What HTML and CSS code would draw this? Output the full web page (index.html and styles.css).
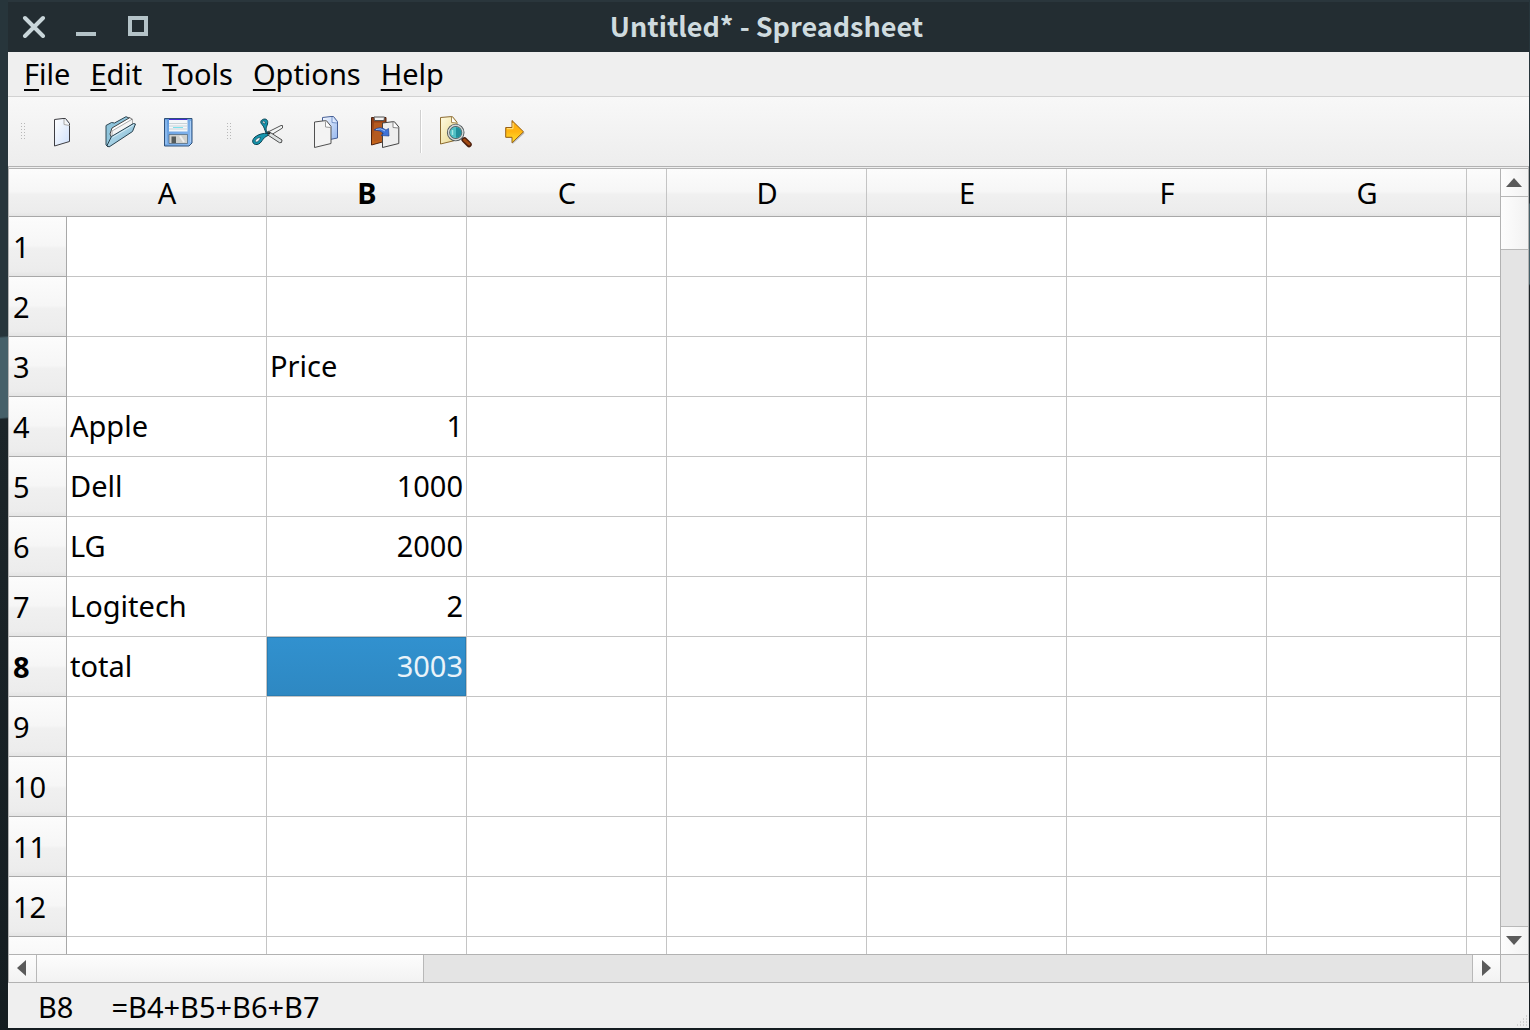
FILE: index.html
```html
<!DOCTYPE html>
<html lang="en">
<head>
<meta charset="utf-8">
<title>Untitled* - Spreadsheet</title>
<link rel="stylesheet" href="styles.css">
</head>
<body>
<div class="window">
  <header class="titlebar">
    <div class="window-buttons">
      <button type="button" aria-label="Close"><svg viewBox="0 0 24 24"><path d="M3 4 21 22M21 4 3 22" stroke="#c9d6da" stroke-width="4" stroke-linecap="round"/></svg></button>
      <button type="button" aria-label="Minimize"><svg viewBox="0 0 24 24"><path d="M2 18h20v4H2z" fill="#b4c3c8"/></svg></button>
      <button type="button" aria-label="Maximize"><svg viewBox="0 0 24 24"><path d="M4 4h16v16H4z" fill="none" stroke="#b4c3c8" stroke-width="4"/></svg></button>
    </div>
    <h1>Untitled* - Spreadsheet</h1>
  </header>

  <nav class="menubar" aria-label="Menu">
    <button type="button"><u>F</u>ile</button>
    <button type="button"><u>E</u>dit</button>
    <button type="button"><u>T</u>ools</button>
    <button type="button"><u>O</u>ptions</button>
    <button type="button"><u>H</u>elp</button>
  </nav>

  <div class="toolbar" role="toolbar" aria-label="Tools">
    <span class="handle"></span>
    <div class="tools">
      <button type="button" aria-label="New">
        <svg viewBox="0 0 32 32">
          <defs><linearGradient id="page" x1="0" y1="0" x2="1" y2="1"><stop offset="0" stop-color="#fff"/><stop offset="1" stop-color="#cfe0fb"/></linearGradient></defs>
          <path d="M8.500 3.500 17 2.500h2.500l4 5v18L8.500 30z" fill="url(#page)" stroke="#3d3d42"/>
          <path d="M18 3v5.500l5.500 1" fill="#f4f4f4" stroke="#aaa"/>
        </svg>
      </button>
      <button type="button" aria-label="Open">
        <svg viewBox="0 0 32 32">
          <defs><linearGradient id="flap" x1="0" y1="0" x2="1" y2="1"><stop offset="0" stop-color="#b9dcea"/><stop offset=".5" stop-color="#a3cfe3"/><stop offset="1" stop-color="#5d9fc0"/></linearGradient></defs>
          <path d="M2 9.500 7.500 6.500l3 .5L22 .7l3 1.300L9 26l-5 5-2-2z" fill="#8fc4db" stroke="#2e4652"/>
          <path d="M6 18 8 12 26 1.500l1.500 1.500v6L8 23z" fill="#fff" stroke="#444"/>
          <path d="M8 15 28.500 3v5L8 23z" fill="#f5f5f5" stroke="#777" stroke-width=".6"/>
          <path d="M3 29.500 7.500 20.500 29.500 7.500l2 .5-3 7.500L5 31z" fill="url(#flap)" stroke="#28404d"/>
          <path d="M8.300 21.500 29.500 9" stroke="#d6edf6"/>
        </svg>
      </button>
      <button type="button" aria-label="Save">
        <svg viewBox="0 0 32 32">
          <defs><linearGradient id="disk" x1="0" y1="0" x2="1" y2="1"><stop offset="0" stop-color="#5c97da"/><stop offset="1" stop-color="#8dbcf3"/></linearGradient></defs>
          <path d="M2.500 2.500h27.500v24.500l-3 3H2.500z" fill="url(#disk)" stroke="#2e5078"/>
          <path d="M4 4v24M28.500 5v21" stroke="#a9cff8"/>
          <path d="M7 3h18.500v12.500H7z" fill="#f4f7f9"/>
          <path d="M7 3.500h18.500" stroke="#462bd8"/>
          <path d="M7 7.500h18.500M7 10h18.500M7 13h18.500" stroke="#c8d2d8"/>
          <path d="M11 11.500h10" stroke="#7ce2ed"/>
          <path d="M7 18.500h18.500v9H7z" fill="#cfd0cc" stroke="#4b6175" stroke-width=".7"/>
          <path d="M9.500 20.500h4.500v6.500h-4.500z" fill="#555b5a"/>
          <path d="M18 20l4 6" stroke="#eee" stroke-width="2"/>
        </svg>
      </button>
    </div>
    <span class="handle"></span>
    <div class="tools">
      <button type="button" aria-label="Cut">
        <svg viewBox="0 0 32 32">
          <path d="M16 16 29 9.500l1.500 0V12L19 19z" fill="#f3f5f5" stroke="#555"/>
          <path d="M16 15 30 24l-.5 2.500-2 .2L15 18.500z" fill="#dde1e1" stroke="#4d4d4d"/>
          <path d="M15.500 17C13 13 14.500 11.500 15.500 8 16.500 4 14 2.500 11.500 3.200 8.500 4 8 6.500 10 8.500c2 1.800 2.500 5 4 8.500z" fill="#1595ae" stroke="#0c4150"/>
          <path d="M10.500 5.300q3-1 2.500 2.700-2.500 0-2.500-2.700z" fill="#f4f4f4" stroke="#0c4150" stroke-width=".7"/>
          <path d="M16 17.500C11 17 7 18 3 21-1 24.500.5 29 5 28.500c5-.5 5-7 11-9z" fill="#1595ae" stroke="#0c4150"/>
          <path d="M8.500 21.500C5 21.500 3 24 3.200 25.500c1.500 1.500 4.500-.5 5.300-4z" fill="#f4f4f4" stroke="#0c4150" stroke-width=".7"/>
          <circle cx="17" cy="17.300" r="1.200" fill="#222"/>
        </svg>
      </button>
      <button type="button" aria-label="Copy">
        <svg viewBox="0 0 32 32">
          <defs><linearGradient id="blue-page" x1="0" y1="0" x2="1" y2="1"><stop offset="0" stop-color="#f4f8ff"/><stop offset="1" stop-color="#91b4ee"/></linearGradient></defs>
          <path d="M12.500 1.500 21 .5h2.500l4 5V22l-15 3z" fill="url(#blue-page)" stroke="#465f96"/>
          <path d="M22 1v5.500l5 .5" fill="#dfebff" stroke="#7794c8"/>
          <path d="M4.500 6 14 4.800h2.500l4.500 5.500v17.200L4.500 31.500z" fill="#f3f3f3" stroke="#505050"/>
          <path d="M15.500 5.500V11l5.500.5" fill="#fff" stroke="#999"/>
        </svg>
      </button>
      <button type="button" aria-label="Paste">
        <svg viewBox="0 0 32 32">
          <defs><linearGradient id="board" x1="0" y1="0" x2="0" y2="1"><stop offset="0" stop-color="#8c3b16"/><stop offset="1" stop-color="#c9671b"/></linearGradient></defs>
          <path d="M3.500 1.500h14.500V25L3.500 29z" fill="url(#board)" stroke="#4e220f"/>
          <path d="M6 6.500h9.500v17L6 25.500z" fill="#b55a20"/>
          <path d="M6 1h10.500l-.5 3.500H6.500z" fill="#f3f3f3" stroke="#555"/>
          <path d="M14.500 7 24 5.800h2.500l4.300 5.200v16.500L14.500 31.500z" fill="#eee" stroke="#444"/>
          <path d="M25 6v5.500l5.500.5" fill="#fff" stroke="#888"/>
          <path d="M6 14q6-4.500 12 0l2.500-1.500.5 7.500-8-.5 2.500-2q-3-3.500-9.500-3.500z" fill="#3d72d8" stroke="#21408d" stroke-width=".7"/>
          <path d="M8 13.500q5-2 9 1.500" fill="none" stroke="#9fc4fa"/>
        </svg>
      </button>
    </div>
    <span class="separator"></span>
    <div class="tools">
      <button type="button" aria-label="Find">
        <svg viewBox="0 0 32 32">
          <defs><linearGradient id="note" x1="0" y1="0" x2="1" y2="1"><stop offset="0" stop-color="#fffbe0"/><stop offset="1" stop-color="#e8d68c"/></linearGradient></defs>
          <path d="M1.500 1.500 11 .7h2.500l4.500 5.500V24L1.500 28z" fill="url(#note)" stroke="#8c6b30"/>
          <path d="M12.500 1v5.500l5 .5" fill="#fff" stroke="#a58a54"/>
          <path d="m22.500 22.500 3 2.500" stroke="#777" stroke-width="3"/>
          <path d="m25.500 24 4.500 4.500" stroke="#4b1e0c" stroke-width="5.500" stroke-linecap="round"/>
          <path d="m25.500 24 4.500 4" stroke="#a34b14" stroke-width="3" stroke-linecap="round"/>
          <circle cx="16.700" cy="16.500" r="7.300" fill="#50bfc4" stroke="#4e5557" stroke-width="3"/>
          <circle cx="16.700" cy="16.500" r="7.200" fill="none" stroke="#d3d9d9" stroke-width="1.400"/>
          <path d="M17 11.200a5.300 5.300 0 0 1 0 10.600z" fill="#228f9b"/>
          <path d="M13.500 14v5" stroke="#a5e8e4" stroke-width="1.500"/>
        </svg>
      </button>
      <button type="button" aria-label="Go to cell">
        <svg viewBox="0 0 32 32">
          <defs><linearGradient id="gold" x1="0" y1="0" x2="0" y2="1"><stop offset="0" stop-color="#ffae10"/><stop offset=".5" stop-color="#ffb512"/><stop offset="1" stop-color="#ffe52e"/></linearGradient></defs>
          <path d="M9.500 12.500h6v-7L27.700 17 15.500 28.300V22h-6z" fill="#bbb"/>
          <path d="M8.700 11.500h6.300V4.500L26.500 15.800 15 26.800V21.300H8.700z" fill="url(#gold)" stroke="#976016"/>
          <path d="M10 12.700h6V7" fill="none" stroke="#ffe38a"/>
        </svg>
      </button>
    </div>
  </div>

  <main class="sheet">
    <div class="viewport">
      <table>
        <colgroup><col class="col-index"><col span="8" class="col-data"></colgroup>
        <thead>
          <tr><td></td><th scope="col">A</th><th scope="col" class="current">B</th><th scope="col">C</th><th scope="col">D</th><th scope="col">E</th><th scope="col">F</th><th scope="col">G</th><th></th></tr>
        </thead>
        <tbody>
          <tr><th scope="row">1</th><td></td><td></td><td></td><td></td><td></td><td></td><td></td><td></td></tr>
          <tr><th scope="row">2</th><td></td><td></td><td></td><td></td><td></td><td></td><td></td><td></td></tr>
          <tr><th scope="row">3</th><td></td><td>Price</td><td></td><td></td><td></td><td></td><td></td><td></td></tr>
          <tr><th scope="row">4</th><td>Apple</td><td class="number">1</td><td></td><td></td><td></td><td></td><td></td><td></td></tr>
          <tr><th scope="row">5</th><td>Dell</td><td class="number">1000</td><td></td><td></td><td></td><td></td><td></td><td></td></tr>
          <tr><th scope="row">6</th><td>LG</td><td class="number">2000</td><td></td><td></td><td></td><td></td><td></td><td></td></tr>
          <tr><th scope="row">7</th><td>Logitech</td><td class="number">2</td><td></td><td></td><td></td><td></td><td></td><td></td></tr>
          <tr><th scope="row" class="current">8</th><td>total</td><td class="number selected">3003</td><td></td><td></td><td></td><td></td><td></td><td></td></tr>
          <tr><th scope="row">9</th><td></td><td></td><td></td><td></td><td></td><td></td><td></td><td></td></tr>
          <tr><th scope="row">10</th><td></td><td></td><td></td><td></td><td></td><td></td><td></td><td></td></tr>
          <tr><th scope="row">11</th><td></td><td></td><td></td><td></td><td></td><td></td><td></td><td></td></tr>
          <tr><th scope="row">12</th><td></td><td></td><td></td><td></td><td></td><td></td><td></td><td></td></tr>
          <tr><th></th><td></td><td></td><td></td><td></td><td></td><td></td><td></td><td></td></tr>
        </tbody>
      </table>
    </div>
    <div class="scrollbar vertical">
      <button type="button" aria-label="Scroll up"><svg viewBox="0 0 16 16"><path d="M0 13 8 4l8 9z"/></svg></button>
      <div class="track"><div class="thumb"></div></div>
      <button type="button" aria-label="Scroll down"><svg viewBox="0 0 16 16"><path d="M0 4h16l-8 9z"/></svg></button>
    </div>
    <div class="scrollbar horizontal">
      <button type="button" aria-label="Scroll left"><svg viewBox="0 0 16 16"><path d="M12 0v16L3 8z"/></svg></button>
      <div class="track"><div class="thumb"></div></div>
      <button type="button" aria-label="Scroll right"><svg viewBox="0 0 16 16"><path d="M4 0v16l9-8z"/></svg></button>
    </div>
    <div class="corner"></div>
  </main>

  <footer class="statusbar">
    <output>B8</output>
    <output>=B4+B5+B6+B7</output>
    <svg class="grip" viewBox="0 0 12 12"><path d="M10 1h1M7 4h1M10 4h1M4 7h1M7 7h1M10 7h1M1 10h1M4 10h1M7 10h1M10 10h1" stroke="#b4b4b4"/></svg>
  </footer>
</div>
</body>
</html>
```

FILE: styles.css
```css
* {
  box-sizing: border-box;
}

body {
  margin: 0;
  font: 29px/40px "Noto Sans", "Open Sans", sans-serif;
  color: #000;
  background: linear-gradient(175deg, #27353b 0 335px, #466069 337px 416px, #1c2529 418px, #131b1f 100%);
}

button {
  margin: 0;
  padding: 0;
  border: 0;
  background: none;
  color: inherit;
  font: inherit;
}

svg {
  display: block;
  fill: none;
}

.window {
  display: flex;
  flex-direction: column;
  height: 100vh;
  padding: 0 1px 2px 8px;
}

.titlebar {
  display: grid;
  grid-template-columns: 1fr auto 1fr;
  align-items: center;
  height: 52px;
  flex: none;
  padding: 0 18px 2px 14px;
  border-top: 2px solid #2a363c;
  background: #232d32;
  color: #cfdbdf;
}

.titlebar h1 {
  margin: 0;
  font: 700 27px/44px "Noto Sans CJK SC", "Noto Sans", sans-serif;
}

.window-buttons {
  display: flex;
  gap: 28px;
}

.window-buttons svg {
  width: 24px;
  height: 24px;
}

.menubar {
  display: flex;
  flex: none;
  gap: 20px;
  height: 45px;
  padding: 2px 16px;
  border-bottom: 1px solid #d2d2d2;
  background: #efefef;
}

.menubar u {
  text-decoration-thickness: 2px;
  text-underline-offset: 4px;
  text-decoration-skip-ink: none;
}

.toolbar {
  display: flex;
  align-items: center;
  flex: none;
  height: 70px;
  padding-left: 13px;
  border-bottom: 1px solid #b2b2b2;
  background: linear-gradient(#f8f8f8, #ededed);
}

.tools {
  display: flex;
}

.tools button {
  width: 58px;
  padding: 0 13px;
}

.tools svg {
  width: 32px;
  height: 32px;
  overflow: visible;
}

.handle {
  width: 4px;
  height: 17px;
  margin-right: 8px;
  background: conic-gradient(from 270deg at 1px 1px, #b8b8b8 25%, transparent 0) 0 0 / 3px 3px;
}

.tools + .handle {
  margin-left: 20px;
}

.separator {
  width: 2px;
  height: 43px;
  margin: 0 4px 0 7px;
  border-left: 1px solid #d0d0d0;
  border-right: 1px solid #fff;
}

.sheet {
  display: grid;
  grid-template: minmax(0, 1fr) 28px / minmax(0, 1fr) 28px;
  flex: 1;
  min-height: 0;
  padding-top: 1px;
  border: 1px solid #b2b2b2;
  border-top: 0;
  background: linear-gradient(#efefef 1px, #b2b2b2 1px 2px, #fff 2px);
}

.viewport {
  overflow: hidden;
  border-top: 1px solid #b2b2b2;
  background: #fff;
}

table {
  width: 1658px;
  table-layout: fixed;
  border-collapse: separate;
  border-spacing: 0;
}

.col-index {
  width: 58px;
}

.col-data {
  width: 200px;
}

th,
td {
  height: 60px;
  padding: 0 3px 2px;
  border-right: 1px solid #c4c4c4;
  border-bottom: 1px solid #c4c4c4;
  font-weight: 400;
  text-align: left;
}

thead th,
thead td {
  height: 48px;
  padding: 0 3px 0 4px;
  border-bottom-color: #a8a8a8;
  background: linear-gradient(#fcfcfc, #f6f6f6 48%, #f0f0f0 54%, #ececec 92%, #e4e4e4);
  text-align: center;
}

thead td {
  border-right: 0;
}

tbody th {
  padding: 0 4px;
  border-color: #a8a8a8;
  background: linear-gradient(#fcfcfc, #f6f6f6 48%, #f0f0f0 54%, #ececec 92%, #e4e4e4);
}

th.current {
  font-weight: 700;
}

td.number {
  text-align: right;
}

td.selected {
  background: linear-gradient(#3191cf, #2e88c2);
  box-shadow: inset 0 0 0 1px #2a7db2;
  color: #eaf3f9;
}

.scrollbar {
  display: flex;
  background: #e4e4e4;
}

.scrollbar button {
  display: grid;
  flex: 0 0 27px;
  padding: 0 2px 2px 0;
  place-items: center;
}

.scrollbar svg {
  width: 16px;
  height: 16px;
  fill: #5a5a5a;
}

.track {
  display: flex;
  flex: 1;
}

.vertical {
  flex-direction: column;
  border-top: 1px solid #b2b2b2;
  border-left: 1px solid #b2b2b2;
}

.vertical .track {
  flex-direction: column;
  border-top: 1px solid #b8b8b8;
  border-bottom: 1px solid #b8b8b8;
}

.vertical button,
.vertical .thumb {
  background: linear-gradient(90deg, #fdfdfd, #f2f2f2);
}

.vertical .thumb {
  height: 53px;
  border-bottom: 1px solid #b8b8b8;
}

.horizontal {
  border-top: 1px solid #b2b2b2;
}

.horizontal .track {
  border-left: 1px solid #b8b8b8;
  border-right: 1px solid #b8b8b8;
}

.horizontal button,
.horizontal .thumb {
  background: linear-gradient(#fdfdfd, #f2f2f2);
}

.horizontal .thumb {
  width: 27%;
  border-right: 1px solid #b8b8b8;
}

.corner {
  border-top: 1px solid #b2b2b2;
  border-left: 1px solid #b2b2b2;
  background: #efefef;
}

.statusbar {
  display: flex;
  flex: none;
  gap: 38px;
  height: 45px;
  padding: 3px 0 0 30px;
  border-top: 1px solid #efefef;
  background: #efefef;
}

.grip {
  width: 12px;
  height: 12px;
  margin: auto 1px 1px auto;
}
```
